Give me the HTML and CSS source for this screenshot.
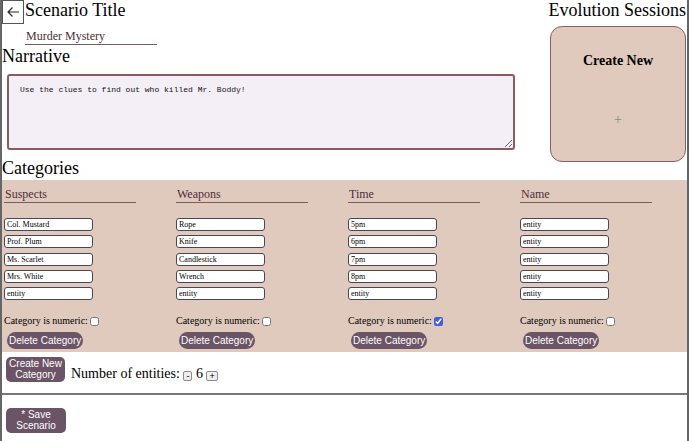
FILE: index.html
```html
<!DOCTYPE html>
<html>
<head>
    <title>Scenario Editor</title>
    <link rel="stylesheet" href="styles.css">
</head>
<body>
    <div class="page">
        <div class="top">
            <div class="scenario">
                <div class="title-row">
                    <button class="back-btn" title="Back">
                        <svg width="14" height="14" viewBox="0 0 14 14"><path d="M13 7H2M6.5 2.5L2 7l4.5 4.5" fill="none" stroke="#222" stroke-width="1.1"/></svg>
                    </button>
                    <h2>Scenario Title</h2>
                </div>
                <input class="line-input title-input" type="text" value="Murder Mystery">
                <h2 class="narrative-heading">Narrative</h2>
                <textarea class="narrative">Use the clues to find out who killed Mr. Boddy!</textarea>
            </div>
            <div class="sessions">
                <h2>Evolution Sessions</h2>
                <div class="session-card">
                    <h3>Create New</h3>
                    <span class="plus">+</span>
                </div>
            </div>
        </div>

        <h2 class="categories-heading">Categories</h2>
        <div class="categories">
            <div class="category">
                <input class="line-input" type="text" value="Suspects">
                <div class="entities">
                    <input class="entity" type="text" value="Col. Mustard">
                    <input class="entity" type="text" value="Prof. Plum">
                    <input class="entity" type="text" value="Ms. Scarlet">
                    <input class="entity" type="text" value="Mrs. White">
                    <input class="entity" type="text" value="entity">
                </div>
                <label class="numeric">Category is numeric: <input type="checkbox"></label>
                <button class="delete-btn">Delete Category</button>
            </div>
            <div class="category">
                <input class="line-input" type="text" value="Weapons">
                <div class="entities">
                    <input class="entity" type="text" value="Rope">
                    <input class="entity" type="text" value="Knife">
                    <input class="entity" type="text" value="Candlestick">
                    <input class="entity" type="text" value="Wrench">
                    <input class="entity" type="text" value="entity">
                </div>
                <label class="numeric">Category is numeric: <input type="checkbox"></label>
                <button class="delete-btn">Delete Category</button>
            </div>
            <div class="category">
                <input class="line-input" type="text" value="Time">
                <div class="entities">
                    <input class="entity" type="text" value="5pm">
                    <input class="entity" type="text" value="6pm">
                    <input class="entity" type="text" value="7pm">
                    <input class="entity" type="text" value="8pm">
                    <input class="entity" type="text" value="entity">
                </div>
                <label class="numeric">Category is numeric: <input type="checkbox" checked></label>
                <button class="delete-btn">Delete Category</button>
            </div>
            <div class="category">
                <input class="line-input" type="text" value="Name">
                <div class="entities">
                    <input class="entity" type="text" value="entity">
                    <input class="entity" type="text" value="entity">
                    <input class="entity" type="text" value="entity">
                    <input class="entity" type="text" value="entity">
                    <input class="entity" type="text" value="entity">
                </div>
                <label class="numeric">Category is numeric: <input type="checkbox"></label>
                <button class="delete-btn">Delete Category</button>
            </div>
        </div>

        <div class="entity-row">
            <button class="action-btn">Create New Category</button>
            <span class="entity-count">Number of entities: <button class="step">-</button> 6 <button class="step">+</button></span>
        </div>

        <div class="divider"></div>

        <button class="action-btn save-btn">* Save Scenario</button>
    </div>
</body>
</html>
```

FILE: styles.css
```css
body {
    margin: 0;
    font-family: "Liberation Serif", "Times New Roman", serif;
    color: #000;
}
.page {
    width: 689px;
    min-height: 441px;
    box-sizing: border-box;
    border-left: 2px solid #666;
    border-right: 2px solid #666;
}
h2 {
    margin: 0;
    font-size: 18px;
    font-weight: normal;
    line-height: 21px;
}
.top {
    display: flex;
    align-items: flex-start;
}
.scenario {
    flex: 1;
}
.title-row {
    display: flex;
    align-items: flex-start;
    height: 24px;
}
.back-btn {
    width: 22px;
    height: 24px;
    margin-right: 1px;
    padding: 0;
    border: 1px solid #555;
    background: white;
    display: flex;
    align-items: center;
    justify-content: center;
}
.line-input {
    height: 15px;
    box-sizing: border-box;
    padding: 0 1px 2px;
    border: none;
    border-bottom: 1px solid #7b5a60;
    background: transparent;
    font-family: "Liberation Serif", serif;
    font-size: 12px;
    color: #4e2d38;
    outline: none;
}
.title-input {
    width: 132px;
    margin: 6px 0 1px 23px;
}
.narrative-heading {
    line-height: 20px;
}
.narrative {
    display: block;
    width: 508px;
    height: 76px;
    box-sizing: border-box;
    margin: 8px 0 0 5px;
    padding: 9px 11px;
    border: 2px solid #8a5c60;
    border-radius: 3px;
    background: #f4eef6;
    font-family: "Liberation Mono", monospace;
    font-size: 8px;
    color: #111;
}
.sessions {
    display: flex;
    flex-direction: column;
    align-items: flex-end;
    padding-right: 1px;
}
.session-card {
    width: 136px;
    height: 136px;
    box-sizing: border-box;
    margin-top: 5px;
    padding: 24px 0 34px;
    border: 1px solid #8b5f63;
    border-radius: 12px;
    background: #e0cabd;
    display: flex;
    flex-direction: column;
    align-items: center;
}
.session-card h3 {
    margin: 0;
    font-size: 14px;
    line-height: 20px;
}
.plus {
    margin-top: auto;
    font-size: 14px;
    line-height: 14px;
    color: #888;
}
.categories-heading {
    line-height: 13px;
}
.categories {
    margin-top: 5px;
    padding: 8px 0 3px 2px;
    background: #e0cabd;
    display: flex;
}
.category {
    flex: 0 0 172px;
    display: flex;
    flex-direction: column;
    align-items: flex-start;
}
.category .line-input {
    width: 132px;
}
.entities {
    margin-top: 15px;
    display: flex;
    flex-direction: column;
    gap: 4.35px;
}
.entity {
    width: 89px;
    height: 13px;
    box-sizing: border-box;
    padding: 0 2px;
    border: 1.3px solid #4a4656;
    border-radius: 3px;
    background: white;
    font-family: "Liberation Serif", serif;
    font-size: 8px;
    color: #000;
}
.numeric {
    margin-top: 15px;
    font-size: 10px;
    line-height: 12px;
    display: flex;
    align-items: center;
    gap: 2px;
}
.numeric input {
    width: 9px;
    height: 9px;
    margin: 0;
    accent-color: #3d5fe0;
}
.delete-btn {
    margin: 4.4px 0 0 3px;
    height: 17px;
    padding: 0 2px;
    border: none;
    border-radius: 9px;
    background: #6b5466;
    color: white;
    font-family: "Liberation Sans", Arial, sans-serif;
    font-size: 10px;
}
.entity-row {
    margin-top: 5px;
    padding-left: 4px;
    display: flex;
    align-items: flex-end;
    gap: 6px;
}
.action-btn {
    width: 59px;
    height: 25px;
    padding: 0;
    border: none;
    border-radius: 5px;
    background: #6b5466;
    color: white;
    font-family: "Liberation Sans", Arial, sans-serif;
    font-size: 10px;
    line-height: 11px;
}
.entity-count {
    font-size: 14px;
    line-height: 16px;
}
.step {
    min-width: 9px;
    height: 10px;
    padding: 0 2px;
    border: 1px solid #8a8a8a;
    border-radius: 2px;
    background: #eee;
    font-family: "Liberation Sans", Arial, sans-serif;
    font-size: 9px;
    line-height: 8px;
    vertical-align: -1px;
}
.divider {
    margin-top: 11px;
    border-top: 2px solid #777;
}
.save-btn {
    width: 60px;
    margin: 13px 0 0 4px;
}
```
